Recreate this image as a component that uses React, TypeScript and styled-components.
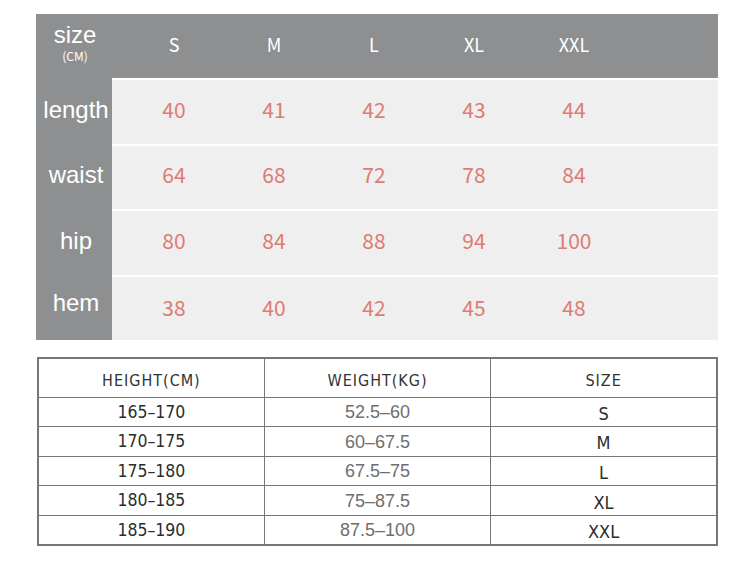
import React from 'react';
import styled, { createGlobalStyle } from 'styled-components';

const GlobalStyle = createGlobalStyle`
  html, body { margin: 0; padding: 0; background: #fff; }
  body { width: 751px; height: 570px; overflow: hidden; }
`;

const GRAY = '#8e8f91';
const LIGHT = '#efefef';
const SALMON = '#de7b73';
const CJK = `"Noto Sans CJK SC", "Noto Sans", sans-serif`;
const NARROW = `"DejaVu Sans Condensed", "DejaVu Sans", "Liberation Sans", sans-serif`;

const SIZES = ['S', 'M', 'L', 'XL', 'XXL'];
const MEASURES = [
  { label: 'length', values: ['40', '41', '42', '43', '44'], lift: 6 },
  { label: 'waist', values: ['64', '68', '72', '78', '84'], lift: 6 },
  { label: 'hip', values: ['80', '84', '88', '94', '100'], lift: 6 },
  { label: 'hem', values: ['38', '40', '42', '45', '48'], lift: 2 },
];
const FIT = [
  ['165–170', '52.5–60', 'S'],
  ['170–175', '60–67.5', 'M'],
  ['175–180', '67.5–75', 'L'],
  ['180–185', '75–87.5', 'XL'],
  ['185–190', '87.5–100', 'XXL'],
];

const Page = styled.div`
  padding: 14px 33px 0 36px;
  display: flex;
  flex-direction: column;
  gap: 17px;
`;

const SizeChart = styled.div`
  width: 682px;
  display: flex;
  flex-direction: column;
`;

const ChartRow = styled.div<{ $head?: boolean }>`
  display: flex;
  height: ${p => (p.$head ? '64px' : '65.5px')};
`;

const Label = styled.div<{ $shift?: number }>`
  width: 76px;
  flex: none;
  background: ${GRAY};
  color: #fff;
  font-family: "Liberation Sans", Arial, sans-serif;
  font-size: 24px;
  display: flex;
  flex-direction: column;
  align-items: center;
  justify-content: center;
  padding-bottom: ${p => p.$shift || 0}px;
  padding-left: 4px;
  box-sizing: border-box;
`;

const HeadLabel = styled(Label)`
  line-height: 21px;
  padding-bottom: 6px;
  padding-left: 2px;
`;

const Unit = styled.span`
  font-family: ${CJK};
  font-size: 12px;
  line-height: 14px;
  margin-top: 4px;
`;

const Cells = styled.div<{ $head?: boolean }>`
  flex: 1;
  display: flex;
  padding-left: 12px;
  background: ${p => (p.$head ? GRAY : LIGHT)};
  border-top: ${p => (p.$head ? 'none' : '2px solid #fff')};
`;

const Cell = styled.div<{ $head?: boolean; $lift?: number }>`
  width: 100px;
  display: flex;
  align-items: center;
  justify-content: center;
  font-family: ${CJK};
  font-size: ${p => (p.$head ? '18px' : '21px')};
  color: ${p => (p.$head ? '#fff' : SALMON)};
  padding-bottom: ${p => (p.$head ? 4 : p.$lift || 0)}px;
`;

const FitTable = styled.table`
  width: 681px;
  margin-left: 1px;
  border-collapse: collapse;
  table-layout: fixed;
  border: 2px solid #777;
`;

const HeadRow = styled.tr`
  height: 39px;
`;

const BodyRow = styled.tr`
  height: 29.6px;
`;

const Th = styled.th`
  border: 1.5px solid #777;
  font-family: ${NARROW};
  font-stretch: condensed;
  font-weight: normal;
  font-size: 16px;
  letter-spacing: 1px;
  line-height: 1;
  color: #333;
  padding: 6px 0 0;
`;

const Td = styled.td<{ $kind: 'height' | 'weight' | 'size' }>`
  border: 1.5px solid #777;
  text-align: center;
  padding: ${p => (p.$kind === 'size' ? '4px 0 0' : '1px 0 0')};
  line-height: 1;
  font-family: ${p => (p.$kind === 'weight' ? `"Liberation Sans", Arial, sans-serif` : NARROW)};
  font-stretch: condensed;
  font-size: ${p => (p.$kind === 'height' ? '17.5px' : '18px')};
  color: ${p => (p.$kind === 'weight' ? '#6e6e6e' : '#2c2c2c')};
`;

const LABEL_SHIFT: Record<string, number> = { length: 2, waist: 2, hip: 2, hem: 8 };

export default function App() {
  return (
    <>
      <GlobalStyle />
      <Page>
        <SizeChart>
          <ChartRow $head>
            <HeadLabel>
              size
              <Unit>(CM)</Unit>
            </HeadLabel>
            <Cells $head>
              {SIZES.map(s => (
                <Cell key={s} $head>{s}</Cell>
              ))}
            </Cells>
          </ChartRow>
          {MEASURES.map(m => (
            <ChartRow key={m.label}>
              <Label $shift={LABEL_SHIFT[m.label]}>{m.label}</Label>
              <Cells>
                {m.values.map((v, i) => (
                  <Cell key={i} $lift={m.lift}>{v}</Cell>
                ))}
              </Cells>
            </ChartRow>
          ))}
        </SizeChart>
        <FitTable>
          <thead>
            <HeadRow>
              <Th>HEIGHT(CM)</Th>
              <Th>WEIGHT(KG)</Th>
              <Th>SIZE</Th>
            </HeadRow>
          </thead>
          <tbody>
            {FIT.map(row => (
              <BodyRow key={row[0]}>
                <Td $kind="height">{row[0]}</Td>
                <Td $kind="weight">{row[1]}</Td>
                <Td $kind="size">{row[2]}</Td>
              </BodyRow>
            ))}
          </tbody>
        </FitTable>
      </Page>
    </>
  );
}
